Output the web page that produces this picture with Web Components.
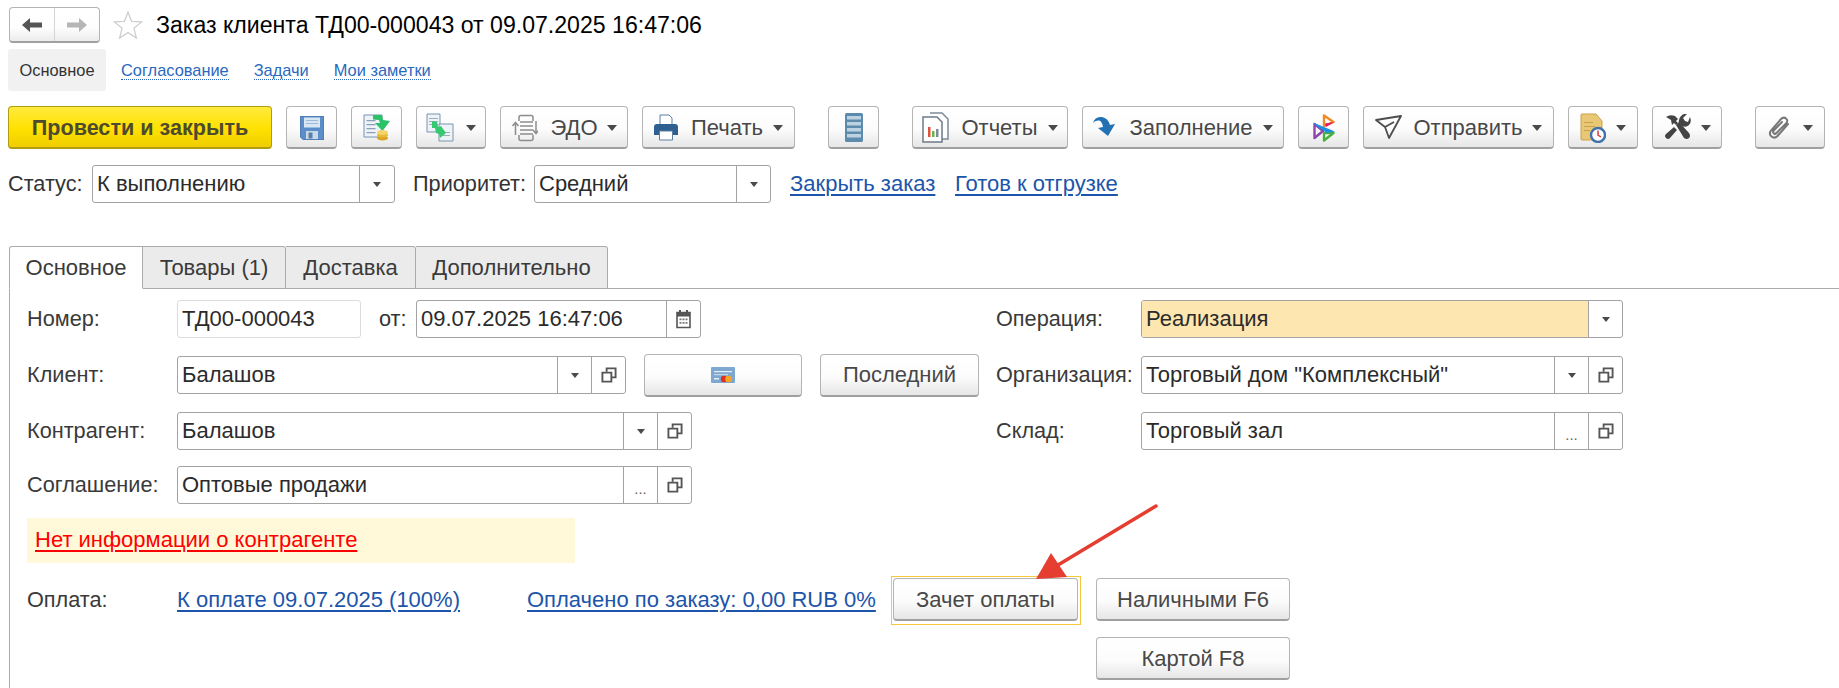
<!DOCTYPE html>
<html lang="ru">
<head>
<meta charset="utf-8">
<title>Заказ клиента</title>
<style>
  html, body { margin: 0; height: 100%; overflow: hidden; background: #fff; }
  body { font: 21.700px "Liberation Sans", Arial, sans-serif; color: #333; }
</style>
</head>
<body>
<order-form></order-form>

<script>
const CARET = `<svg width="10" height="6" viewBox="0 0 10 6"><path d="M0 0h10L5 6z" fill="#4a4a4a"/></svg>`;
const COPY = `<svg width="16" height="16" viewBox="0 0 17 17" fill="none" stroke="#555" stroke-width="2"><path d="M6 5V1.500h9.500V11H11"/><path d="M1.500 6H11v9.500H1.500z"/></svg>`;

class ToolBtn extends HTMLElement {
    constructor() {
        super();
        this.attachShadow({ mode: 'open' });
    }

    connectedCallback() {
        const w = this.getAttribute('w');
        const caret = this.hasAttribute('caret');
        this.shadowRoot.innerHTML = `
            <style>
                :host {
                    display: inline-flex;
                    flex: none;
                    box-sizing: border-box;
                    width: ${w}px;
                    height: var(--h, 43px);
                    align-items: center;
                    justify-content: var(--justify, center);
                    gap: var(--gap, 0);
                    padding: 1px 0 0;
                    border: 1px solid #b4b4b4;
                    border-bottom: 2px solid #a0a0a0;
                    border-radius: 4px;
                    background: linear-gradient(#fff 0, #fcfcfc 55%, #e6e6e6 100%);
                    color: #484848;
                    font-size: 22px;
                    white-space: nowrap;
                }
                :host([primary]) {
                    border-color: #b29c12;
                    background: linear-gradient(#ffeb3c 0, #ffe100 55%, #efcd00 100%);
                    color: #4d4a2e;
                    font-weight: bold;
                    font-size: 21.600px;
                }
                .caret { display: flex; margin-left: var(--caret-gap, 12px); }
                ::slotted(svg) { display: block; flex: none; }
            </style>
            <slot name="icon"></slot><slot></slot>${caret ? `<span class="caret">${CARET}</span>` : ''}`;
    }
}
customElements.define('tool-btn', ToolBtn);

class ComboField extends HTMLElement {
    constructor() {
        super();
        this.attachShadow({ mode: 'open' });
    }

    connectedCallback() {
        const parts = (this.getAttribute('parts') || '').split(' ').filter(Boolean);
        const cells = parts.map(p => {
            if (p == 'drop') return `<span class="cell">${CARET.replace('width="10"', 'width="8"').replace('height="6"', 'height="5"')}</span>`;
            if (p == 'more') return `<span class="cell more">...</span>`;
            if (p == 'open') return `<span class="cell">${COPY}</span>`;
            if (p == 'cal') return `<span class="cell"><svg width="15" height="19" viewBox="0 0 15 19"><path d="M3 0h2v3H3zM10 0h2v3h-2z" fill="#555"/><path d="M1 2.500h13v15H1z" fill="#fff" stroke="#555" stroke-width="1.600"/><path d="M1 3h13v3.500H1z" fill="#555"/><path d="M3.500 8.500h2v1.800h-2zM6.500 8.500h2v1.800h-2zM9.500 8.500h2v1.800h-2zM3.500 12h2v1.800h-2zM6.500 12h2v1.800h-2zM9.500 12h2v1.800h-2z" fill="#777"/></svg></span>`;
            return '';
        }).join('');
        this.shadowRoot.innerHTML = `
            <style>
                :host {
                    display: inline-flex;
                    flex: none;
                    box-sizing: border-box;
                    width: ${this.getAttribute('w')}px;
                    height: 38px;
                    border: 1px solid #a3a3a3;
                    border-radius: 3px;
                    background: #fff;
                    color: #2b2b2b;
                    font-size: 22px;
                    overflow: hidden;
                }
                :host([plain]) { border-color: #dcdcdc; }
                :host([hilite]) .text { background: #fee6b0; }
                .text { flex: 1; min-width: 0; padding-left: 4px; line-height: 36px; white-space: nowrap; }
                .cell {
                    flex: none;
                    width: var(--cell, 34px);
                    display: flex;
                    align-items: center;
                    justify-content: center;
                    border-left: 1px solid #a3a3a3;
                    box-sizing: border-box;
                }
                .more { color: #666; font-size: 15px; padding-top: 6px; }
            </style>
            <span class="text"><slot></slot></span>${cells}`;
    }
}
customElements.define('combo-field', ComboField);

class FormRow extends HTMLElement {
    constructor() {
        super();
        this.attachShadow({ mode: 'open' });
    }

    connectedCallback() {
        this.shadowRoot.innerHTML = `
            <style>
                :host {
                    display: flex;
                    align-items: center;
                    height: 38px;
                    margin-bottom: 18px;
                }
                .label { flex: none; width: var(--label, 150px); color: #3a3a3a; white-space: nowrap; }
            </style>
            <span class="label">${this.getAttribute('label')}</span><slot></slot>`;
    }
}
customElements.define('form-row', FormRow);

class LinkText extends HTMLElement {
    constructor() {
        super();
        this.attachShadow({ mode: 'open' });
    }

    connectedCallback() {
        this.shadowRoot.innerHTML = `
            <style>
                :host {
                    display: inline-block;
                    flex: none;
                    color: #1c55a9;
                    font-size: 22px;
                    text-decoration: underline;
                    text-decoration-thickness: 1.500px;
                    text-underline-offset: 3px;
                    white-space: nowrap;
                }
                :host([alert]) { color: #f00; }
            </style>
            <slot></slot>`;
    }
}
customElements.define('link-text', LinkText);

class TabStrip extends HTMLElement {
    constructor() {
        super();
        this.attachShadow({ mode: 'open' });
    }

    connectedCallback() {
        const tabs = [['Основное', 134, 1], ['Товары (1)', 143], ['Доставка', 130], ['Дополнительно', 192]];
        this.shadowRoot.innerHTML = `
            <style>
                :host {
                    display: flex;
                    height: 43px;
                    margin-left: 9px;
                    box-sizing: border-box;
                    border-bottom: 1px solid #ababab;
                }
                .tab {
                    flex: none;
                    box-sizing: border-box;
                    height: 43px;
                    display: flex;
                    align-items: center;
                    justify-content: center;
                    border: 1px solid #ababab;
                    border-left-width: 0;
                    border-radius: 0 3px 0 0;
                    background: #ebebeb;
                    color: #3a3a3a;
                    font-size: 22px;
                }
                .tab.on {
                    background: #fff;
                    border-left-width: 1px;
                    border-bottom-color: #fff;
                    border-radius: 3px 0 0 0;
                }
            </style>
            ${tabs.map(t => `<div class="tab${t[2] ? ' on' : ''}" style="width:${t[1]}px">${t[0]}</div>`).join('')}`;
    }
}
customElements.define('tab-strip', TabStrip);

class OrderForm extends HTMLElement {
    constructor() {
        super();
        this.attachShadow({ mode: 'open' });
    }

    connectedCallback() {
        this.shadowRoot.innerHTML = `
            <style>
                :host { display: block; position: relative; width: 1839px; height: 688px; overflow: hidden; }

                .head { display: flex; align-items: center; height: 36px; margin: 7px 0 0 9px; }
                .history {
                    display: flex; width: 91px; height: 36px; box-sizing: border-box;
                    border: 1px solid #b4b4b4; border-bottom: 2px solid #a0a0a0; border-radius: 4px;
                    background: linear-gradient(#fff, #fdfdfd 60%, #ececec);
                }
                .history span { flex: 1; display: flex; align-items: center; justify-content: center; }
                .history span + span { border-left: 1px solid #d4d4d4; }
                .star { margin-left: 13px; }
                h1 { margin: 0 0 0 13px; font: 400 23.100px "Liberation Sans", Arial, sans-serif; color: #000; white-space: nowrap; }

                nav { display: flex; align-items: center; height: 42px; margin: 6px 0 0 8px; font-size: 16.400px; }
                nav b { font-weight: 400; display: flex; align-items: center; justify-content: center; width: 98px; height: 42px; background: #f1f1f1; border-radius: 3px; color: #333; }
                nav a { color: #2a68c0; border-bottom: 1px dotted #2a68c0; line-height: 18px; margin-left: 25px; white-space: nowrap; }
                nav b + a { margin-left: 15px; }

                .tools { display: flex; gap: 14px; margin: 15px 0 0 8px; }
                .spacer { width: 5px; flex: none; }

                .status { display: flex; align-items: center; height: 38px; margin: 16px 0 0 8px; }
                .status span { flex: none; }

                .panel {
                    margin-left: 9px;
                    height: 400px;
                    box-sizing: border-box;
                    padding: 11px 0 0 17px;
                    border-left: 1px solid #ababab;
                }
                .cols { display: flex; }
                .left { width: 969px; flex: none; --cell: 34px; }
                .right { --label: 145px; }

                .warn { width: 548px; height: 45px; box-sizing: border-box; padding-left: 8px; line-height: 44px; background: #fff9d9; margin: -6px 0 13px 0; }

                .pay { display: flex; align-items: flex-start; }
                .pay > span, .pay > link-text { line-height: 48px; }
                .frame { border: 1px solid #f7c83a; padding: 1px 2px 3px 1px; height: 49px; box-sizing: border-box; }
                .stack { display: flex; flex-direction: column; gap: 16px; margin: 2px 0 0 15px; }

                .arrow { position: absolute; left: 1030px; top: 500px; }
            </style>

            <div class="head">
                <div class="history">
                    <span><svg width="20" height="16" viewBox="0 0 20 16"><path d="M0 8l8-7v4.500h12v5H8V15z" fill="#555"/></svg></span>
                    <span><svg width="20" height="16" viewBox="0 0 20 16"><path d="M20 8l-8-7v4.500H0v5h12V15z" fill="#b6b6b6"/></svg></span>
                </div>
                <svg class="star" width="30" height="30" viewBox="0 0 30 30"><path d="M15 2l3.600 9.300 10 .6-7.700 6.400 2.500 9.700L15 22.600 6.600 28l2.500-9.700L1.400 11.900l10-.6z" fill="#fff" stroke="#cfcfcf" stroke-width="1.300"/></svg>
                <h1>Заказ клиента ТД00-000043 от 09.07.2025 16:47:06</h1>
            </div>

            <nav>
                <b>Основное</b><a>Согласование</a><a>Задачи</a><a>Мои заметки</a>
            </nav>

            <div class="tools">
                <tool-btn w="264" primary>Провести и закрыть</tool-btn>
                <tool-btn w="51">
                    <svg slot="icon" width="24" height="24" viewBox="0 0 24 24"><path d="M0 0h24v24H3l-3-3z" fill="#5b8ec9"/><path d="M.5.5h23v23H3.200L.5 20.800z" fill="none" stroke="#4f7fb5"/><path d="M4 1.500h16v10H4z" fill="#d9e6f4"/><path d="M6 4h12v1H6zM6 7h12v1H6z" fill="#9db8d6"/><path d="M6 15h12v8H6z" fill="#c9d9ea"/><path d="M8.500 16.500h4v6h-4z" fill="#5b7fa8"/></svg>
                </tool-btn>
                <tool-btn w="51">
                    <svg slot="icon" width="28" height="27" viewBox="0 0 28 27"><path d="M1 1h18v22H1z" fill="#eef3f8" stroke="#7b93ad"/><path d="M3.500 6h9v1.300h-9zM3.500 10h9v1.300h-9zM3.500 14h9v1.300h-9zM3.500 18h9v1.300h-9z" fill="#8aa0b8"/><path d="M10 1h9l1 5 7 1-7.500 10L12 9h5l-1-3-6-.5z" fill="#2bc26a"/><ellipse cx="19.500" cy="24" rx="5.500" ry="2.600" fill="#d9a520"/><ellipse cx="19.500" cy="21" rx="5.500" ry="2.600" fill="#e6b93a"/><ellipse cx="19.500" cy="18.500" rx="5.500" ry="2.400" fill="#f4d466"/></svg>
                </tool-btn>
                <tool-btn w="70" caret style="--caret-gap:11px">
                    <svg slot="icon" width="29" height="29" viewBox="0 0 29 29"><path d="M1 1h13v18H1z" fill="#eef3f8" stroke="#7b93ad"/><path d="M3 5h9v1H3zM3 8h9v1H3zM3 11h9v1H3z" fill="#9aaec2"/><path d="M13 11h14v17H13z" fill="#eef3f8" stroke="#7b93ad"/><path d="M17 19h7v1h-7zM17 22h7v1h-7z" fill="#9aaec2"/><path d="M6 8l5 1 1 5 3-1 5 7-6 5-1-4-3-1-1-5-3 0z" fill="#36c96f"/></svg>
                </tool-btn>
                <tool-btn w="128" caret style="--gap:12px;--caret-gap:-3px">
                    <svg slot="icon" width="27" height="28" viewBox="0 0 27 28" fill="none" stroke="#8d8d8d" stroke-width="1.500"><path d="M8 7V3.500q0-2 2-2h10q2 0 2 2V7M8 21v3.500q0 2 2 2h10q2 0 2-2V21"/><path d="M9 8h13M9 12h13M9 16h13M9 20h13"/><path d="M4.500 21V9M1.500 12l3-3.500 3 3.500M25 7v12M22 16l3 3.500 3-3.500"/></svg>
                    ЭДО
                </tool-btn>
                <tool-btn w="153" caret style="--gap:13px;--caret-gap:-3px">
                    <svg slot="icon" width="24" height="27" viewBox="0 0 24 27"><path d="M6 1h9l3 3v7H6z" fill="#fff" stroke="#5b7fa3"/><path d="M0 13q0-3 3-3h18q3 0 3 3v8h-5v-3H5v3H0z" fill="#2f5f8f"/><path d="M5.500 17h13v9h-13z" fill="#fff" stroke="#5b7fa3"/></svg>
                    Печать
                </tool-btn>
                <div class="spacer"></div>
                <tool-btn w="51">
                    <svg slot="icon" width="18" height="29" viewBox="0 0 18 29"><path d="M1.500 0h15q1.500 0 1.500 1.500v26q0 1.500-1.500 1.500h-15Q0 29 0 27.500v-26Q0 0 1.500 0z" fill="#5d8bae"/><path d="M2 3h14v3.500H2zM2 9h14v3.500H2zM2 15h14v3.500H2zM2 21h14v3.500H2z" fill="#bcd2e0"/></svg>
                </tool-btn>
                <div class="spacer"></div>
                <tool-btn w="156" caret style="--gap:12px;--caret-gap:-2px">
                    <svg slot="icon" width="27" height="31" viewBox="0 0 27 31"><path d="M8 1h12l6 6v20H20" fill="#fff" stroke="#7d8b98" stroke-width="1.500"/><path d="M1 5h14l5 5v20H1z" fill="#fff" stroke="#6d7b88" stroke-width="1.500"/><path d="M6 15h2.500v10H6z" fill="#e2503a"/><path d="M10 19h2.500v6H10z" fill="#67b548"/><path d="M14 17h2.500v8H14z" fill="#7d8b98"/></svg>
                    Отчеты
                </tool-btn>
                <tool-btn w="202" caret style="--gap:13px;--caret-gap:-3px">
                    <svg slot="icon" width="23" height="24" viewBox="0 0 23 24"><path d="M0 7q2-7 9-6 6 1 8 8l5-1-7 12-10-8 5-1Q9 5 6 4.500 2 4 0 7z" fill="#2271b3"/></svg>
                    Заполнение
                </tool-btn>
                <tool-btn w="51">
                    <svg slot="icon" width="22" height="28" viewBox="0 0 22 28"><path d="M11 1.500L20.500 8 11 12z" fill="none" stroke="#f08a24" stroke-width="2.400" stroke-linejoin="round"/><path d="M21.500 8L13 13l-1-3.500z" fill="#e8175d"/><path d="M1.500 10v14L10 17z" fill="none" stroke="#8e44ad" stroke-width="2.400" stroke-linejoin="round"/><path d="M11 19h9.500L11 26.500z" fill="none" stroke="#47b03c" stroke-width="2.400" stroke-linejoin="round"/><path d="M0 8.500l22 9-8 1.500L3.500 12z" fill="#1d8fe0"/></svg>
                </tool-btn>
                <tool-btn w="191" caret style="--gap:11px;--caret-gap:-2px">
                    <svg slot="icon" width="27" height="25" viewBox="0 0 27 25" fill="none" stroke="#4d4d4d" stroke-width="1.800" stroke-linejoin="round"><path d="M1 5l25-4-12 22-4-11z"/><path d="M10 12l9-5"/></svg>
                    Отправить
                </tool-btn>
                <tool-btn w="70" caret style="--caret-gap:10px">
                    <svg slot="icon" width="26" height="30" viewBox="0 0 26 30"><path d="M1 2q0-1 1-1h14l6 7v19H2q-1 0-1-1z" fill="#e8c874" stroke="#c9a14c"/><path d="M4 9h9v1H4zM4 13h11v1H4zM4 17h6v1H4z" fill="#c9a14c"/><circle cx="18" cy="22" r="7" fill="#fff" stroke="#3f72ae" stroke-width="2.400"/><path d="M18 17.500V22l3 2" fill="none" stroke="#e03a3a" stroke-width="1.500"/></svg>
                </tool-btn>
                <tool-btn w="70" caret style="--caret-gap:10px">
                    <svg slot="icon" width="27" height="27" viewBox="0 0 27 27"><g fill="#444"><path d="M2 3q4-3 9-1l3 3-2 2 2 2-2 2-2-2-2 2-1-5q-3-2-5-3z"/><path d="M10 13l3 3-7 8q-2 2-4 0t0-4z"/><path d="M12 11l3-3 10 11q2 3 0 5t-5 0z"/><path d="M26 3q2 5-1 8t-7 1l-2 2-3-3 2-2q-1-4 2-7t6-2l-4 4 2 3 3 1z"/></g></svg>
                </tool-btn>
                <div class="spacer"></div>
                <tool-btn w="70" caret style="--caret-gap:13px">
                    <svg slot="icon" width="22" height="25" viewBox="0 0 22 25" fill="none" stroke="#777" stroke-width="2" stroke-linecap="round"><path d="M20 9L9.500 21q-3 3-6 .5t-.5-6L13 4q2.500-2.500 5-.5t0 5L8.500 18q-1.500 1.500-2.800.3t0-2.800L14 7"/></svg>
                </tool-btn>
            </div>

            <div class="status">
                <span style="width:84px">Статус:</span>
                <combo-field w="303" parts="drop" style="--cell:35px">К выполнению</combo-field>
                <span style="margin-left:18px;width:121px">Приоритет:</span>
                <combo-field w="237" parts="drop" style="--cell:34px">Средний</combo-field>
                <link-text style="margin-left:19px;width:165px">Закрыть заказ</link-text>
                <link-text>Готов к отгрузке</link-text>
            </div>

            <div style="height:43px"></div>
            <tab-strip></tab-strip>

            <div class="panel">
                <div class="cols">
                    <div class="left">
                        <form-row label="Номер:">
                            <combo-field w="184" plain>ТД00-000043</combo-field>
                            <span style="margin-left:18px;width:37px">от:</span>
                            <combo-field w="285" parts="cal">09.07.2025 16:47:06</combo-field>
                        </form-row>
                        <form-row label="Клиент:">
                            <combo-field w="449" parts="drop open">Балашов</combo-field>
                            <tool-btn w="158" style="margin-left:18px">
                                <svg slot="icon" width="24" height="16" viewBox="0 0 24 16"><path d="M0 1q0-1 1-1h22q1 0 1 1v14q0 1-1 1H1q-1 0-1-1z" fill="#7fa8d0"/><path d="M3 4h18v1.200H3z" fill="#e4eef7"/><path d="M3 7h14v1.200H3z" fill="#c5d8ea"/><path d="M3 11h5v1.500H3z" fill="#e4eef7"/><circle cx="13" cy="12" r="3.200" fill="#e0301f"/><circle cx="17.500" cy="12" r="3.200" fill="#f5a623"/></svg>
                            </tool-btn>
                            <tool-btn w="159" style="margin-left:18px">Последний</tool-btn>
                        </form-row>
                        <form-row label="Контрагент:">
                            <combo-field w="515" parts="drop open">Балашов</combo-field>
                        </form-row>
                        <form-row label="Соглашение:" style="margin-top:-2px;margin-bottom:20px">
                            <combo-field w="515" parts="more open">Оптовые продажи</combo-field>
                        </form-row>
                    </div>
                    <div class="right">
                        <form-row label="Операция:">
                            <combo-field w="482" parts="drop" hilite>Реализация</combo-field>
                        </form-row>
                        <form-row label="Организация:">
                            <combo-field w="482" parts="drop open">Торговый дом "Комплексный"</combo-field>
                        </form-row>
                        <form-row label="Склад:">
                            <combo-field w="482" parts="more open">Торговый зал</combo-field>
                        </form-row>
                    </div>
                </div>

                <div class="warn"><link-text alert>Нет информации о контрагенте</link-text></div>

                <div class="pay">
                    <span style="width:150px;flex:none;color:#3a3a3a">Оплата:</span>
                    <link-text style="width:350px">К оплате 09.07.2025 (100%)</link-text>
                    <link-text style="width:364px">Оплачено по заказу: 0,00 RUB 0%</link-text>
                    <div class="frame"><tool-btn w="185">Зачет оплаты</tool-btn></div>
                    <div class="stack">
                        <tool-btn w="194">Наличными F6</tool-btn>
                        <tool-btn w="194">Картой F8</tool-btn>
                    </div>
                </div>
            </div>

            <svg class="arrow" width="130" height="85" viewBox="1030 500 130 85"><path d="M1156 506L1058 565" fill="none" stroke="#e53d2f" stroke-width="3.500" stroke-linecap="round"/><path d="M1036 579L1051 553 1067 577z" fill="#e53d2f"/></svg>
        `;
    }
}
customElements.define('order-form', OrderForm);
</script>
</body>
</html>
